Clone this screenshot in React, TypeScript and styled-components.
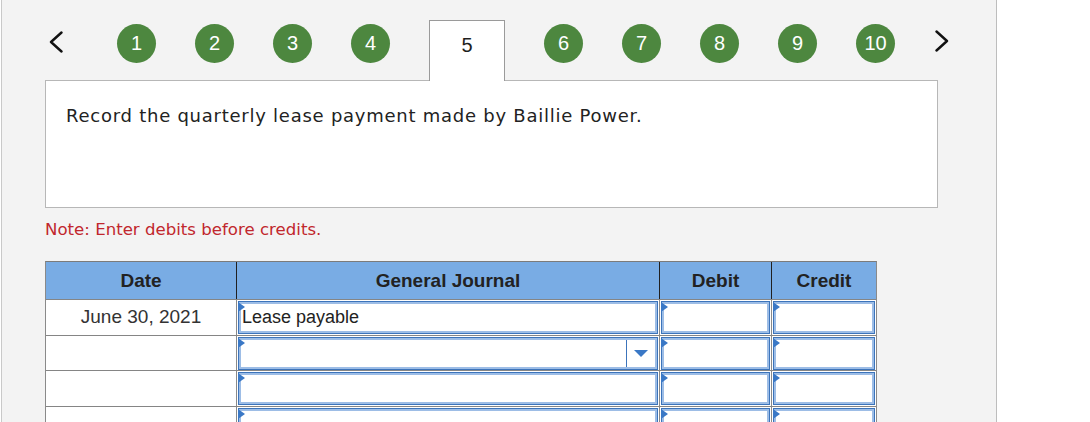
import styled, { createGlobalStyle } from 'styled-components';

const GlobalStyle = createGlobalStyle`
  html, body {
    margin: 0;
    padding: 0;
    background: #ffffff;
    overflow: hidden;
  }
  body {
    font-family: "Liberation Sans", Arial, sans-serif;
  }
`

const Panel = styled.div`
  margin-left: 1px;
  width: 996px;
  min-height: 422px;
  box-sizing: border-box;
  background: #f3f3f3;
  border-left: 1px solid #c9c9c9;
  border-right: 1px solid #bdbdbd;
  padding: 20px 0 0 43px;
`

const Nav = styled.div`
  display: flex;
  align-items: flex-start;
  gap: 39px;
  padding-left: 4px;
  height: 60px;
`

const Arrow = styled.button<{ $side: 'left' | 'right' }>`
  display: flex;
  border: 0;
  padding: 0;
  background: none;
  width: 14px;
  height: 22px;
  margin-top: ${p => (p.$side === 'left' ? '11px' : '10px')};
  margin-right: ${p => (p.$side === 'left' ? '15px' : '0')};
  margin-left: ${p => (p.$side === 'right' ? '1px' : '0')};
`

const Circle = styled.div`
  width: 39px;
  height: 39px;
  margin-top: 4px;
  border-radius: 50%;
  background: #4d873f;
  color: #ffffff;
  font-size: 20px;
  display: flex;
  align-items: center;
  justify-content: center;
`

const Tab = styled.div`
  position: relative;
  z-index: 1;
  width: 76px;
  height: 61px;
  box-sizing: border-box;
  background: #ffffff;
  border: 1px solid #9a9a9a;
  border-bottom: 0;
  color: #1e1e1e;
  font-size: 20px;
  display: flex;
  justify-content: center;
  padding-top: 13px;
`

const Question = styled.div`
  width: 893px;
  height: 128px;
  box-sizing: border-box;
  background: #ffffff;
  border: 1px solid #b7b7b7;
  padding: 24px 0 0 20px;
  font-family: "DejaVu Sans", Verdana, sans-serif;
  font-size: 18px;
  letter-spacing: 0.75px;
  color: #222222;
`

const Note = styled.div`
  margin-top: 12px;
  font-family: "DejaVu Sans", Verdana, sans-serif;
  font-size: 16.6px;
  color: #c1272d;
`

const Journal = styled.div`
  margin-top: 22px;
  width: 832px;
  box-sizing: border-box;
  border-top: 1px solid #7b7b7b;
  border-left: 1px solid #8a8a8a;
  border-right: 1px solid #8a8a8a;
`

const Row = styled.div<{ $head?: boolean }>`
  display: grid;
  grid-template-columns: 191px 423px 112px 104px;
  height: ${p => (p.$head ? '37px' : '34.7px')};
  background: ${p => (p.$head ? '#79ace4' : '#ffffff')};
  border-bottom: 1px solid #858585;
`

const HeadCell = styled.div<{ $last?: boolean }>`
  display: flex;
  align-items: center;
  justify-content: center;
  font-size: 19px;
  font-weight: bold;
  color: #222222;
  border-right: ${p => (p.$last ? '0' : '1px solid #202020')};
`

const DateCell = styled.div`
  display: flex;
  align-items: center;
  justify-content: center;
  font-size: 19px;
  color: #333333;
  border-right: 1px solid #8a8a8a;
`

const EntryCell = styled.div`
  position: relative;
  padding: 1px 1px 0 1px;
  border-right: 1px solid #8a8a8a;
  &:last-child {
    border-right: 0;
  }
`

const Field = styled.div`
  height: 33px;
  box-sizing: border-box;
  display: flex;
  align-items: center;
  border: 1px solid #3c74bb;
  box-shadow: inset 0 0 0 2px #9dbde6;
  background: #ffffff;
  font-size: 18px;
  color: #222222;
  padding-left: 3px;
`

const FieldText = styled.span`
  flex: 1;
`

const Marker = styled.span`
  position: absolute;
  left: 1px;
  top: 2px;
  width: 0;
  height: 0;
  border-top: 5px solid transparent;
  border-bottom: 5px solid transparent;
  border-left: 7px solid #3a78c6;
`

const DropButton = styled.div`
  align-self: stretch;
  width: 28px;
  margin: 2px 2px 2px 0;
  border-left: 1px solid #3c74bb;
  display: flex;
  align-items: center;
  justify-content: center;
`

const Chevron = ({ dir }: { dir: 'left' | 'right' }) => (
  <svg width="14" height="22" viewBox="0 0 14 22">
    <polyline
      points={dir === 'left' ? '12.5,1.5 2,11 12.5,20.5' : '1.5,1.5 12,11 1.5,20.5'}
      fill="none"
      stroke="#111"
      strokeWidth="2.4"
      strokeLinecap="round"
      strokeLinejoin="round"
    />
  </svg>
)

const CaretDown = () => (
  <svg width="14" height="7" viewBox="0 0 14 7">
    <polygon points="0,0 14,0 7,7" fill="#3a78c6" />
  </svg>
)

const steps = [1, 2, 3, 4, 5, 6, 7, 8, 9, 10]
const current = 5

type Entry = { date: string; account: string; dropdown?: boolean }

const entries: Entry[] = [
  { date: 'June 30, 2021', account: 'Lease payable' },
  { date: '', account: '', dropdown: true },
  { date: '', account: '' },
  { date: '', account: '' },
]

const Input = ({ text, dropdown }: { text?: string; dropdown?: boolean }) => (
  <EntryCell>
    <Field>
      <FieldText>{text}</FieldText>
      {dropdown && (
        <DropButton>
          <CaretDown />
        </DropButton>
      )}
    </Field>
    <Marker />
  </EntryCell>
)

export default function App() {
  return (
    <>
      <GlobalStyle />
      <Panel>
        <Nav>
          <Arrow $side="left"><Chevron dir="left" /></Arrow>
          {steps.map(n =>
            n === current ? <Tab key={n}>{n}</Tab> : <Circle key={n}>{n}</Circle>
          )}
          <Arrow $side="right"><Chevron dir="right" /></Arrow>
        </Nav>
        <Question>Record the quarterly lease payment made by Baillie Power.</Question>
        <Note>Note: Enter debits before credits.</Note>
        <Journal>
          <Row $head>
            <HeadCell>Date</HeadCell>
            <HeadCell>General Journal</HeadCell>
            <HeadCell>Debit</HeadCell>
            <HeadCell $last>Credit</HeadCell>
          </Row>
          {entries.map((e, i) => (
            <Row key={i}>
              <DateCell>{e.date}</DateCell>
              <Input text={e.account} dropdown={e.dropdown} />
              <Input />
              <Input />
            </Row>
          ))}
        </Journal>
      </Panel>
    </>
  )
}
